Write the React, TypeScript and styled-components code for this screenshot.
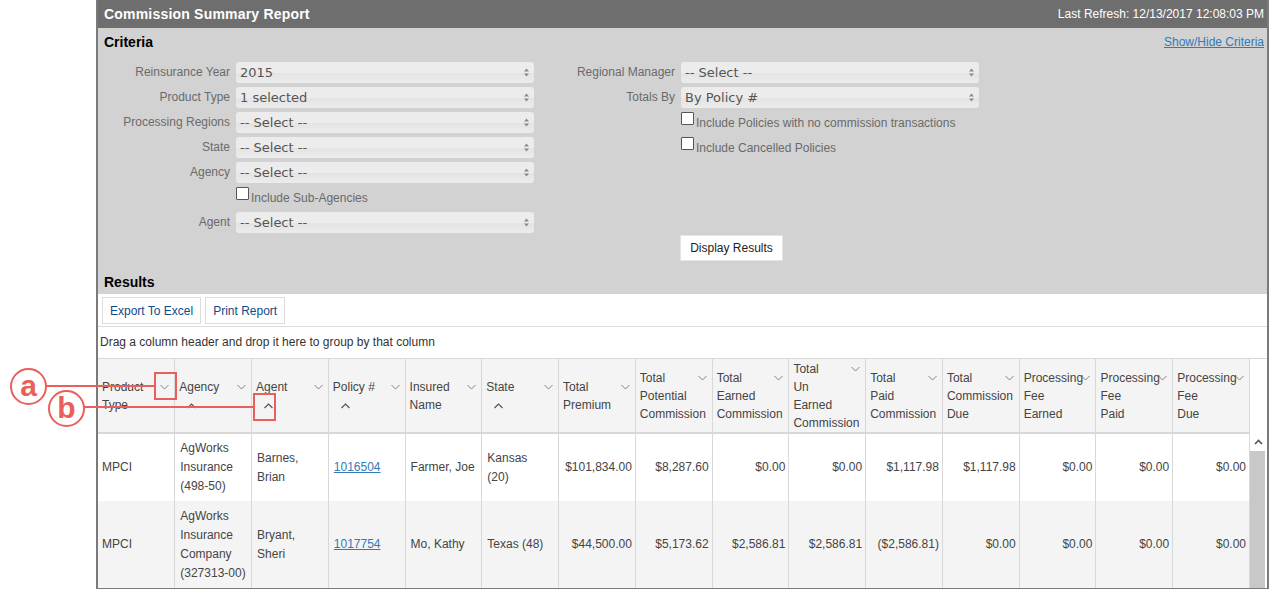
import React from "react";
import styled, { createGlobalStyle } from "styled-components";

const Global = createGlobalStyle`
  html, body { margin: 0; padding: 0; background: #fff; overflow: hidden; }
  body { font-family: "Liberation Sans", Arial, sans-serif; font-size: 12px; color: #444; }
`;

const Page = styled.div`
  position: relative;
  width: 1280px;
  height: 589px;
  overflow: hidden;
  padding-left: 96px;
  box-sizing: border-box;
`;

const Panel = styled.div`
  width: 1173px;
  height: 589px;
  box-sizing: border-box;
  border-left: 2px solid #7a7a7a;
  border-right: 2px solid #7a7a7a;
  border-bottom: 1px solid #7a7a7a;
  overflow: hidden;
  display: flex;
  flex-direction: column;
`;

const TitleBar = styled.div`
  height: 28px;
  flex: none;
  background: #6e6e6e;
  display: flex;
  align-items: center;
  justify-content: space-between;
  padding: 3px 3px 0 6px;
  box-sizing: border-box;
  color: #fff;
`;

const Title = styled.div`
  font-size: 14px;
  font-weight: 700;
  letter-spacing: 0.2px;
  margin-top: -3px;
`;

const Refresh = styled.div`
  font-size: 12px;
  margin-top: -3px;
`;

const Criteria = styled.div`
  background: #d2d2d2;
  height: 266px;
  flex: none;
  padding: 0 3px 0 6px;
  box-sizing: border-box;
  display: flex;
  flex-direction: column;
`;

const SectionRow = styled.div`
  display: flex;
  justify-content: space-between;
  height: 34px;
  flex: none;
  padding-top: 6px;
  box-sizing: border-box;
`;

const SectionTitle = styled.div`
  font-size: 14px;
  font-weight: 700;
  line-height: 16px;
  color: #000;
`;

const ToggleLink = styled.a`
  font-size: 12px;
  line-height: 16px;
  color: #337ab7;
  text-decoration: underline;
`;

const Columns = styled.div`
  display: flex;
  height: 176px;
  flex: none;
`;

const Column = styled.div<{ $label: number; $width: number }>`
  width: ${(p) => p.$width}px;
  flex: none;
  display: grid;
  grid-template-columns: ${(p) => p.$label}px 298px;
  grid-auto-rows: 25px;
  column-gap: 6px;
  align-content: start;
`;

const FieldLabel = styled.label`
  text-align: right;
  color: #6a6a6a;
  font-size: 12px;
  line-height: 21px;
  margin-right: 0;
`;

const Select = styled.div`
  height: 21px;
  border-radius: 3px;
  background: linear-gradient(to bottom, #ececec 0, #ececec 50%, #e4e4e4 55%, #ececec 100%);
  display: flex;
  align-items: center;
  justify-content: space-between;
  padding: 0 4px;
  box-sizing: border-box;
  font-family: "DejaVu Sans", Verdana, sans-serif;
  font-size: 13px;
  color: #555;
`;

const CheckRow = styled.div`
  grid-column: 2;
  display: flex;
  align-items: flex-start;
  color: #6a6a6a;
  font-size: 12px;
  line-height: 16px;
  padding-top: 0;
`;

const CheckBox = styled.span`
  display: block;
  width: 11px;
  height: 11px;
  background: #fff;
  border: 1px solid #555;
  border-radius: 1px;
  margin: 0 2px 0 0;
`;

const CheckText = styled.span`
  margin-top: 3px;
`;

const Empty = styled.div``;

const ActionRow = styled.div`
  height: 26px;
  flex: none;
  padding-left: 576px;
  margin-top: -3px;
`;

const DisplayButton = styled.button`
  height: 26px;
  width: 103px;
  background: #fff;
  border: 1px solid #e4e4e4;
  font: 12px "Liberation Sans", Arial, sans-serif;
  color: #222;
  padding: 0;
`;

const ResultsTitle = styled(SectionTitle)`
  margin-top: 13px;
`;

const Toolbar = styled.div`
  height: 33px;
  flex: none;
  background: #fff;
  border-bottom: 1px solid #dcdcdc;
  box-sizing: border-box;
  display: flex;
  gap: 4px;
  padding: 3px 0 0 4px;
`;

const ToolButton = styled.div`
  height: 27px;
  box-sizing: border-box;
  border: 1px solid #dcdcdc;
  padding: 0 7px;
  line-height: 26px;
  color: #0f4c8a;
  font-size: 12px;
`;

const GroupHint = styled.div`
  height: 32px;
  flex: none;
  box-sizing: border-box;
  border-bottom: 1px solid #d8d8d8;
  padding-left: 2px;
  line-height: 30px;
  font-size: 12px;
  color: #333;
`;

const GridWrap = styled.div`
  display: flex;
  flex: 1;
  min-height: 0;
`;

const Table = styled.table`
  width: 1152px;
  flex: none;
  table-layout: fixed;
  border-collapse: collapse;
  align-self: flex-start;
`;

const HeadCell = styled.th`
  position: relative;
  height: 74px;
  box-sizing: border-box;
  padding: 0 0 0 4px;
  background: #f4f4f4;
  border-right: 1px solid #d8d8d8;
  border-bottom: 2px solid #d8d8d8;
  text-align: left;
  font-weight: 400;
  vertical-align: middle;
  font-size: 12px;
  line-height: 18px;
  color: #444;
  white-space: nowrap;
`;

const HeadInner = styled.div`
  position: relative;
`;

const SortDown = styled.svg`
  position: absolute;
  top: 6px;
  right: 5px;
  width: 9px;
  height: 6px;
`;

const SortUp = styled.svg`
  display: block;
  width: 9px;
  height: 6px;
  margin: 7px 0 5px 8px;
`;

const Row = styled.tr<{ $alt?: boolean; $h: number }>`
  height: ${(p) => p.$h}px;
  background: ${(p) => (p.$alt ? "#f4f4f4" : "#fff")};
`;

const Cell = styled.td<{ $right?: boolean; $first?: boolean }>`
  box-sizing: border-box;
  border-right: 1px solid #d8d8d8;
  padding: 0 ${(p) => (p.$right ? "3px" : "0")} 0 ${(p) => (p.$first ? "4px" : p.$right ? "0" : "5px")};
  text-align: ${(p) => (p.$right ? "right" : "left")};
  font-size: 12px;
  line-height: 19px;
  color: #444;
  white-space: nowrap;
`;

const PolicyLink = styled.a`
  color: #337ab7;
  text-decoration: underline;
`;

const Gutter = styled.div`
  flex: 1;
  display: flex;
  flex-direction: column;
`;

const GutterHead = styled.div`
  height: 74px;
  flex: none;
`;

const ScrollArrow = styled.div`
  height: 18px;
  flex: none;
  display: flex;
  justify-content: center;
  align-items: center;
  padding-right: 1px;
`;

const ScrollThumb = styled.div`
  flex: 1;
  width: 15px;
  background: #c8c8c8;
`;

const Callout = styled.div<{ $x: number; $y: number }>`
  position: absolute;
  left: ${(p) => p.$x}px;
  top: ${(p) => p.$y}px;
  width: 37px;
  height: 37px;
  box-sizing: border-box;
  border: 2px solid #ea5f5b;
  border-radius: 50%;
  background: #fff;
  color: #ea5f5b;
  font: 700 30px/31px "Liberation Sans", Arial, sans-serif;
  text-align: center;
`;

const Leader = styled.div<{ $x: number; $y: number; $w: number }>`
  position: absolute;
  left: ${(p) => p.$x}px;
  top: ${(p) => p.$y}px;
  width: ${(p) => p.$w}px;
  height: 2px;
  background: #ea5f5b;
`;

const Marker = styled.div<{ $x: number; $y: number; $h: number }>`
  position: absolute;
  left: ${(p) => p.$x}px;
  top: ${(p) => p.$y}px;
  width: 23px;
  height: ${(p) => p.$h}px;
  box-sizing: border-box;
  border: 2px solid #ea5f5b;
`;

const Updown = () => (
  <svg width="7" height="9" viewBox="0 0 7 9" aria-hidden="true">
    <path d="M3.5 0.5 L6 3.5 H1 Z M3.5 8.5 L6 5.5 H1 Z" fill="#8a8a8a" />
  </svg>
);

const Down = () => (
  <SortDown viewBox="0 0 9 6" aria-hidden="true">
    <path d="M0.5 1 L4.5 5 L8.5 1" fill="none" stroke="#777" strokeWidth="0.9" />
  </SortDown>
);

const Up = () => (
  <SortUp viewBox="0 0 9 6" aria-hidden="true">
    <path d="M0.5 5 L4.5 1 L8.5 5" fill="none" stroke="#555" strokeWidth="1.2" />
  </SortUp>
);

const headers: { lines: string[]; up?: boolean }[] = [
  { lines: ["Product", "Type"] },
  { lines: ["Agency"], up: true },
  { lines: ["Agent"], up: true },
  { lines: ["Policy #"], up: true },
  { lines: ["Insured", "Name"] },
  { lines: ["State"], up: true },
  { lines: ["Total", "Premium"] },
  { lines: ["Total", "Potential", "Commission"] },
  { lines: ["Total", "Earned", "Commission"] },
  { lines: ["Total", "Un", "Earned", "Commission"] },
  { lines: ["Total", "Paid", "Commission"] },
  { lines: ["Total", "Commission", "Due"] },
  { lines: ["Processing", "Fee", "Earned"] },
  { lines: ["Processing", "Fee", "Paid"] },
  { lines: ["Processing", "Fee", "Due"] },
];

type RowData = { h: number; alt?: boolean; agency: string[]; agent: string[]; policy: string; insured: string; state: string[]; money: string[] };

const rows: RowData[] = [
  {
    h: 68,
    agency: ["AgWorks", "Insurance", "(498-50)"],
    agent: ["Barnes,", "Brian"],
    policy: "1016504",
    insured: "Farmer, Joe",
    state: ["Kansas", "(20)"],
    money: ["$101,834.00", "$8,287.60", "$0.00", "$0.00", "$1,117.98", "$1,117.98", "$0.00", "$0.00", "$0.00"],
  },
  {
    h: 87,
    alt: true,
    agency: ["AgWorks", "Insurance", "Company", "(327313-00)"],
    agent: ["Bryant,", "Sheri"],
    policy: "1017754",
    insured: "Mo, Kathy",
    state: ["Texas (48)"],
    money: ["$44,500.00", "$5,173.62", "$2,586.81", "$2,586.81", "($2,586.81)", "$0.00", "$0.00", "$0.00", "$0.00"],
  },
];

const Lines = ({ lines }: { lines: string[] }) => (
  <>
    {lines.map((l, i) => (
      <React.Fragment key={i}>
        {i > 0 && <br />}
        {l}
      </React.Fragment>
    ))}
  </>
);

const leftFields: [string, string][] = [
  ["Reinsurance Year", "2015"],
  ["Product Type", "1 selected"],
  ["Processing Regions", "-- Select --"],
  ["State", "-- Select --"],
  ["Agency", "-- Select --"],
];

const Field = ({ label, value }: { label: string; value: string }) => (
  <>
    <FieldLabel>{label}</FieldLabel>
    <Select>
      <span>{value}</span>
      <Updown />
    </Select>
  </>
);

const Check = ({ text }: { text: string }) => (
  <>
    <Empty />
    <CheckRow>
      <CheckBox />
      <CheckText>{text}</CheckText>
    </CheckRow>
  </>
);

export default function App() {
  return (
    <Page>
      <Global />
      <Panel>
        <TitleBar>
          <Title>Commission Summary Report</Title>
          <Refresh>Last Refresh: 12/13/2017 12:08:03 PM</Refresh>
        </TitleBar>
        <Criteria>
          <SectionRow>
            <SectionTitle>Criteria</SectionTitle>
            <ToggleLink>Show/Hide Criteria</ToggleLink>
          </SectionRow>
          <Columns>
            <Column $label={126} $width={442}>
              {leftFields.map(([l, v]) => (
                <Field key={l} label={l} value={v} />
              ))}
              <Check text="Include Sub-Agencies" />
              <Field label="Agent" value="-- Select --" />
            </Column>
            <Column $label={129} $width={433}>
              <Field label="Regional Manager" value="-- Select --" />
              <Field label="Totals By" value="By Policy #" />
              <Check text="Include Policies with no commission transactions" />
              <Check text="Include Cancelled Policies" />
            </Column>
          </Columns>
          <ActionRow>
            <DisplayButton>Display Results</DisplayButton>
          </ActionRow>
          <ResultsTitle>Results</ResultsTitle>
        </Criteria>
        <Toolbar>
          <ToolButton>Export To Excel</ToolButton>
          <ToolButton>Print Report</ToolButton>
        </Toolbar>
        <GroupHint>Drag a column header and drop it here to group by that column</GroupHint>
        <GridWrap>
          <Table>
            <thead>
              <tr>
                {headers.map((h, i) => (
                  <HeadCell key={i}>
                    <HeadInner>
                      <Lines lines={h.lines} />
                      <Down />
                      {h.up && <Up />}
                    </HeadInner>
                  </HeadCell>
                ))}
              </tr>
            </thead>
            <tbody>
              {rows.map((r) => (
                <Row key={r.policy} $alt={r.alt} $h={r.h}>
                  <Cell $first>MPCI</Cell>
                  <Cell><Lines lines={r.agency} /></Cell>
                  <Cell><Lines lines={r.agent} /></Cell>
                  <Cell><PolicyLink>{r.policy}</PolicyLink></Cell>
                  <Cell>{r.insured}</Cell>
                  <Cell><Lines lines={r.state} /></Cell>
                  {r.money.map((m, i) => (
                    <Cell key={i} $right>{m}</Cell>
                  ))}
                </Row>
              ))}
            </tbody>
          </Table>
          <Gutter>
            <GutterHead />
            <ScrollArrow>
              <svg width="9" height="6" viewBox="0 0 9 6" aria-hidden="true">
                <path d="M1 5 L4.5 1.5 L8 5" fill="none" stroke="#555" strokeWidth="1.6" />
              </svg>
            </ScrollArrow>
            <ScrollThumb />
          </Gutter>
        </GridWrap>
      </Panel>
      <Leader $x={46} $y={385} $w={110} />
      <Leader $x={84} $y={406} $w={170} />
      <Marker $x={154} $y={372} $h={28} />
      <Marker $x={253} $y={393} $h={28} />
      <Callout $x={10} $y={368}>a</Callout>
      <Callout $x={48} $y={390}>b</Callout>
    </Page>
  );
}
